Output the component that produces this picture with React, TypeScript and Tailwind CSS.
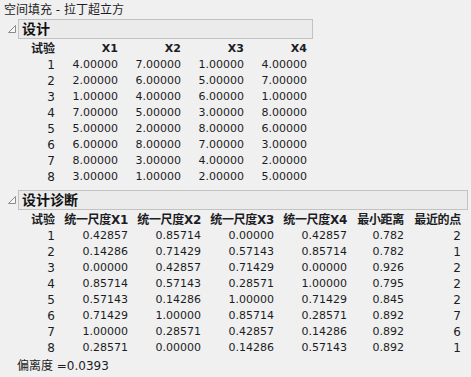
const FONT = {
  fontFamily: '"DejaVu Sans", "Noto Sans CJK SC", sans-serif',
};

const design = [
  ["4.00000", "7.00000", "1.00000", "4.00000"],
  ["2.00000", "6.00000", "5.00000", "7.00000"],
  ["1.00000", "4.00000", "6.00000", "1.00000"],
  ["7.00000", "5.00000", "3.00000", "8.00000"],
  ["5.00000", "2.00000", "8.00000", "6.00000"],
  ["6.00000", "8.00000", "7.00000", "3.00000"],
  ["8.00000", "3.00000", "4.00000", "2.00000"],
  ["3.00000", "1.00000", "2.00000", "5.00000"],
];

const diag = [
  ["0.42857", "0.85714", "0.00000", "0.42857", "0.782", "2"],
  ["0.14286", "0.71429", "0.57143", "0.85714", "0.782", "1"],
  ["0.00000", "0.42857", "0.71429", "0.00000", "0.926", "2"],
  ["0.85714", "0.57143", "0.28571", "1.00000", "0.795", "2"],
  ["0.57143", "0.14286", "1.00000", "0.71429", "0.845", "2"],
  ["0.71429", "1.00000", "0.85714", "0.28571", "0.892", "7"],
  ["1.00000", "0.28571", "0.42857", "0.14286", "0.892", "6"],
  ["0.28571", "0.00000", "0.14286", "0.57143", "0.892", "1"],
];

function Outline({ title, width }: { title: string; width: string }) {
  return (
    <div className="flex h-5 items-center">
      <svg width="18" height="20" viewBox="0 0 18 20" className="shrink-0">
        <path d="M8.5 13.5 L15.5 6.5 L15.5 13.5 Z" fill="#f8f8f8" stroke="#8a8a8a" strokeWidth="1" />
      </svg>
      <div
        className={`flex h-5 items-center border border-[#c2c2c2] bg-[#ebebeb] pl-[3px] text-[14px] font-bold text-[#111] ${width}`}
      >
        {title}
      </div>
    </div>
  );
}

export default function App() {
  return (
    <div className="h-[377px] w-[471px] overflow-hidden bg-[#f0f0f0] text-[#1c1c24]" style={FONT}>
      <div className="flex h-[19px] items-center pl-1 text-[12px] leading-none">空间填充 - 拉丁超立方</div>

      <Outline title="设计" width="w-[295px]" />
      <div className="mt-[2px] grid grid-cols-[55px_63px_63px_63px_63px] text-right text-[11px] leading-[16px]">
        <div className="text-[12px] font-bold">试验</div>
        {["X1", "X2", "X3", "X4"].map((h) => (
          <div key={h} className="font-bold">{h}</div>
        ))}
        {design.map((row, i) => (
          <div key={i} className="contents">
            <div className="text-[12px]">{i + 1}</div>
            {row.map((v, j) => (
              <div key={j}>{v}</div>
            ))}
          </div>
        ))}
      </div>

      <div className="mt-[5px]">
        <Outline title="设计诊断" width="w-[450px]" />
      </div>
      <div className="mt-[2px] grid grid-cols-[55px_73px_73px_73px_73px_57px_57px] text-right text-[11px] leading-[16px]">
        <div className="text-[12px] font-bold">试验</div>
        {["统一尺度X1", "统一尺度X2", "统一尺度X3", "统一尺度X4", "最小距离", "最近的点"].map((h) => (
          <div key={h} className="text-[12px] font-bold tracking-[-0.3px]">{h}</div>
        ))}
        {diag.map((row, i) => (
          <div key={i} className="contents">
            <div className="text-[12px]">{i + 1}</div>
            {row.map((v, j) => (
              <div key={j} className={j === 5 ? "text-[12px]" : ""}>{v}</div>
            ))}
          </div>
        ))}
      </div>
      <div className="mt-[2px] flex h-4 items-center pl-[17px] text-[12px]">偏离度 =0.0393</div>
    </div>
  );
}
